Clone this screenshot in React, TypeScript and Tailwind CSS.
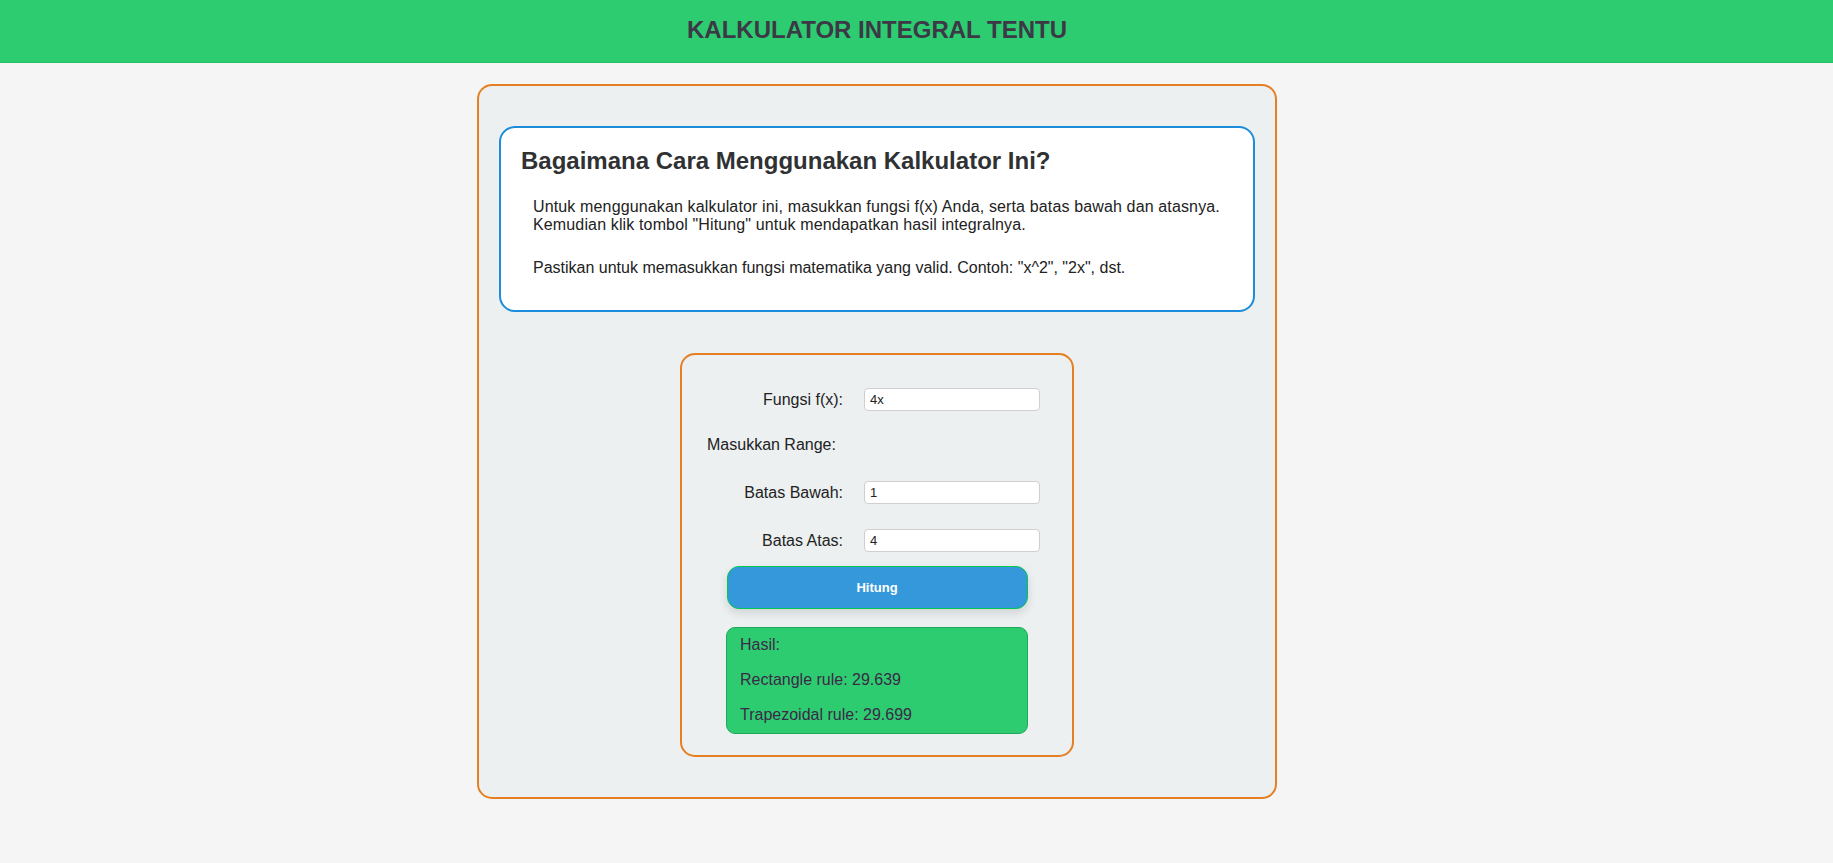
import { useState } from 'react';

const font = { fontFamily: '"Liberation Sans", Arial, sans-serif' };

function Row({
  label,
  value,
  onChange,
  className = '',
}: {
  label: string;
  value: string;
  onChange: (v: string) => void;
  className?: string;
}) {
  return (
    <div className={`flex items-center h-[23px] ${className}`}>
      <label className="w-[136px] text-right text-[16px] leading-[18px] text-[#222]">{label}</label>
      <input
        value={value}
        onChange={(e) => onChange(e.target.value)}
        className="ml-[21px] w-[176px] h-[23px] rounded-[4px] border border-[#cfcfcf] bg-white px-[5px] text-[13px] text-[#222] outline-none"
        style={font}
      />
    </div>
  );
}

export default function App() {
  const [fx, setFx] = useState('4x');
  const [lower, setLower] = useState('1');
  const [upper, setUpper] = useState('4');

  return (
    <div className="min-h-screen bg-[#f5f5f5]" style={font}>
      {/* header */}
      <header className="h-[63px] bg-[#2ecc71] border-b border-[#29c06a]">
        <h1 className="pr-[79px] pt-[16px] text-center text-[24px] leading-[28px] font-bold text-[#3c3846]">
          KALKULATOR INTEGRAL TENTU
        </h1>
      </header>

      <div className="flex flex-col items-center pr-[79px] pt-[21px] pb-[40px]">
        <div className="w-[800px] rounded-[15px] border-2 border-[#e67e22] bg-[#ecf0f1] px-[20px] pt-[40px] pb-[40px]">
          {/* info */}
          <section className="h-[186px] rounded-[16px] border-2 border-[#1b8ddb] bg-white px-[20px] pt-[19px]">
            <h2 className="text-[24px] leading-[28px] font-bold text-[#2f3133]">
              Bagaimana Cara Menggunakan Kalkulator Ini?
            </h2>
            <div className="mt-[23px] pl-[12px] text-[16px] leading-[18px] text-[#222]">
              <p className="tracking-[0.14px]">
                Untuk menggunakan kalkulator ini, masukkan fungsi f(x) Anda, serta batas bawah dan atasnya.
                Kemudian klik tombol "Hitung" untuk mendapatkan hasil integralnya.
              </p>
              <p className="mt-[25px]">
                Pastikan untuk memasukkan fungsi matematika yang valid. Contoh: "x^2", "2x", dst.
              </p>
            </div>
          </section>

          {/* form */}
          <section className="mx-auto mt-[41px] w-[394px] rounded-[15px] border-2 border-[#e67e22] bg-[#ecf0f1] pl-[25px] pt-[33px] pb-[21px]">
            <Row label="Fungsi f(x):" value={fx} onChange={setFx} />
            <div className="mt-[25px] text-[16px] leading-[18px] text-[#222]">Masukkan Range:</div>
            <Row label="Batas Bawah:" value={lower} onChange={setLower} className="mt-[27px]" />
            <Row label="Batas Atas:" value={upper} onChange={setUpper} className="mt-[25px]" />
            <div className="-ml-[25px] flex flex-col items-center">
              <button className="mt-[14px] h-[43px] w-[301px] rounded-[12px] border-[1.5px] border-[#00c851] bg-[#3498db] text-[13px] font-bold text-white shadow-[0_4px_10px_rgba(0,0,0,0.12)]">
                Hitung
              </button>
              <div className="mt-[18px] h-[107px] w-[302px] rounded-[9px] border border-[#1fa85a] bg-[#2ecc71] px-[13px] pt-[8px] text-[16px] leading-[18px] text-[#3b2a46]">
                <p>Hasil:</p>
                <p className="mt-[17px]">Rectangle rule: 29.639</p>
                <p className="mt-[17px]">Trapezoidal rule: 29.699</p>
              </div>
            </div>
          </section>
        </div>
      </div>
    </div>
  );
}
